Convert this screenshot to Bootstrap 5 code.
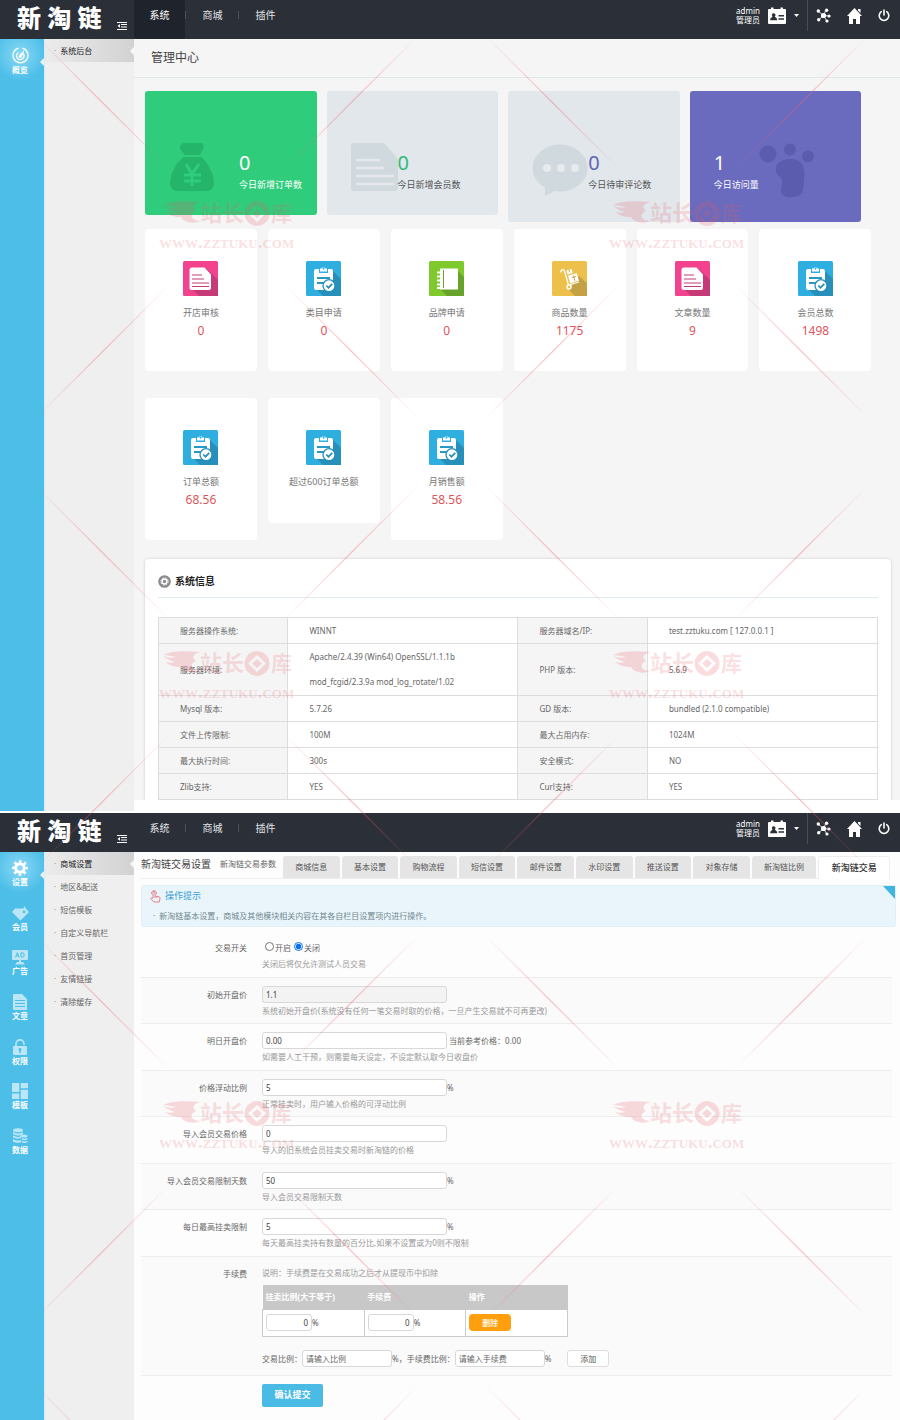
<!DOCTYPE html>
<html lang="zh-CN">
<head>
<meta charset="utf-8">
<meta name="viewport" content="width=device-width, initial-scale=1">
<title>新淘链 管理中心</title>
<link href="https://cdn.jsdelivr.net/npm/bootstrap@5.3.0/dist/css/bootstrap.min.css" rel="stylesheet">
<style>
body{font-family:"Noto Sans","Noto Sans CJK SC",sans-serif;font-size:8px;line-height:14px;color:#666;background:#fff}
a{color:inherit;text-decoration:none}
svg{display:block;flex:none}
/* top bar */
.topbar{height:39px;background:#2a2f38;color:#fff}
.brandmark{width:134px;padding-left:17px}
.brandmark a{font-size:24px;line-height:36px;font-weight:900;color:#fff}
.brandmark button{padding:0;border:0;background:none;color:#fff;margin:22px 7px 0 0}
.mainmenu a{display:block;width:51px;line-height:31px;font-size:10px;text-align:center;color:#e3e5e8}
.mainmenu a.on{background:#1f242c;color:#fff;border-radius:0 0 2px 2px}
.mainmenu i{width:1px;height:8px;margin:11px 1px 0 0;background:#4b525c}
.who{font-size:8px;line-height:9px;text-align:right;padding-top:6px}
.tools{height:31px;padding-right:10px}
.tools .rule{width:1px;height:31px;background:#484e57}
.tools button,.tools a{border:0;background:none;padding:0;color:#fff}
/* side bars */
.rail{width:45px;background:#4cbee8;border-right:1px solid #d5ecf5;color:#fff}
.rail a{display:flex;flex-direction:column;align-items:center;height:45px;padding:8px 4px 0 0;font-weight:700;position:relative;line-height:11px}
.rail a:nth-child(3n+2){height:44px}
.rail a svg{opacity:.62}
.rail a.on{background:radial-gradient(circle at 45% 35%,#8ad8f5,#4cbee8 70%)}
.rail a.on svg{opacity:1}
.rail a.on::after,.submenu a.on::after{content:"";position:absolute;right:0;top:50%;margin-top:-4px;border:4px solid transparent;border-left:0;border-right-color:#efefef}
.submenu{width:89px;background:#efefef}
.submenu a{display:block;height:23px;line-height:23px;padding-left:9px;color:#666;position:relative}
.submenu a::before{content:"·";margin-right:4px;color:#999}
.submenu a.on{background:linear-gradient(to right,#ececec,#d2d2d2);color:#222}
.submenu a.on::after{border-right-color:#f8f8f8}
.minw0{min-width:0}
/* dashboard */
.dash{background:#f5f5f5;margin-bottom:11px}
.dash h1{font-size:12px;line-height:38px;font-weight:400;color:#444;margin:0;padding-left:17px;border-bottom:1px solid #dde9ea}
.dashbody{padding:13px 9px 0 11px}
.tiles{display:grid;grid-template-columns:repeat(4,23%);gap:10px;align-items:start}
.tile{padding:52px 0 24px 24px;border-radius:3px;background:#e1e7eb;display:flex}
.tile strong{display:block;font-size:20px;line-height:20px;font-weight:400;padding-top:10px}
.tile small{display:block;font-size:9px;line-height:12px;padding-top:6px;white-space:nowrap;color:#555}
.tile.green{background:#2fcc7b;color:#fff}.tile.violet{background:#6a6bbe;color:#fff}
.tile.green small,.tile.violet small{color:#fff}
.c-green{color:#36b97a}.c-violet{color:#6465b5}
.counts{display:grid;grid-template-columns:repeat(6,15%);gap:27px 11px;align-items:start;margin-top:7px}
.count{background:#fff;border-radius:4px;padding:32px 0 33px;text-align:center}
.count svg{margin:0 auto 8px}
.count span{display:block;font-size:9px;line-height:17px;color:#777}
.count b{display:block;font-size:12px;line-height:20px;height:17px;font-weight:400;color:#e0555b}
.sysinfo{background:#fff;margin-top:19px;padding:13px 13px 0;border-radius:4px 4px 0 0;box-shadow:0 0 3px rgba(0,0,0,.18);clip-path:inset(-4px -4px 0 -4px)}
.sysinfo h2{font-size:10px;line-height:19px;font-weight:700;color:#222;margin:0 0 19px;padding-bottom:6px;border-bottom:1px solid #e0ecec}
.infotable{width:100%;table-layout:fixed;border-collapse:collapse;line-height:25px}
.infotable td,.infotable th{border:1px solid #ddd;padding:0 30px 0 21px;font-weight:400}
.infotable th{background:#f5f5f5;width:18%;padding-right:0}
.infotable tr.two td{padding-bottom:1px}
/* settings */
.settings{background:#fdfdfd;padding:4px 4px 0 7px}
.settings h1{font-size:10px;line-height:16px;font-weight:400;color:#444;margin:0 9px 0 0;white-space:nowrap}
.tabhead{border-bottom:1px solid #eee;margin-right:6px;height:23px}
.tabset{gap:2px;margin-left:7px}
.tabset a{flex:1 1 auto;height:22px;line-height:22px;text-align:center;background:#e5e5e5;border-radius:3px 3px 0 0;color:#555;white-space:nowrap;padding:0 10px}
.tabset a.on{background:#fff;border:1px solid #eee;border-bottom:0;height:23px;font-size:9px;font-weight:500;color:#333}
.tips{background:#eaf5fb;border-radius:3px;border:1px solid #e0f0f8;margin-top:6px;padding:3px 7px 4px;height:42px;position:relative;color:#71898f}
.tips h2{font-size:9px;line-height:14px;color:#389fd6;margin:0;font-weight:400}
.tips p{margin:6px 0 0 4px;line-height:14px}
.tips button{position:absolute;right:0;top:0;width:12px;height:13px;padding:0;border:0;background:#40b5df;clip-path:polygon(0 0,100% 0,100% 100%)}
.frow{display:flex;padding:8px 0 5px;margin-right:4px;border-bottom:1px solid #eee;line-height:17px;min-height:46px}
.frow:nth-of-type(odd){padding-bottom:6px}
.frow:nth-of-type(even){background:#fafafa}
.frow .cap{width:106px;text-align:right;margin-right:15px;flex:none}
.help{color:#999;line-height:14px;margin-top:1px}
.box{display:inline-block;width:185px;height:17px;border:1px solid #d8d8d8;border-radius:3px;padding:0 3px;font-size:8px;line-height:15px;color:#444;background:#fff}
.box:disabled{background:#f3f3f3}
.box.sm{width:46px;text-align:right}.box.md{width:90px}
.box::placeholder{color:#666;opacity:1}
.frow input[type=radio]{width:9px;height:9px;margin:0 1px 0 3px;accent-color:#0b6ff0}
.feetable{width:306px;border-collapse:collapse;table-layout:fixed;background:#fff;margin:5px 0 13px}
.feetable th{background:#c8c8c8;color:#fff;height:24px;padding:0 3px;border-bottom:1px solid #c8c8c8}
.feetable td{border:1px solid #ccc;height:27px;padding:0 3px;color:#555}
.del{width:42px;height:17px;border:0;border-radius:4px;background:#ff9f0d;color:#fff;font-weight:500;padding:0;display:block}
.addb{width:42px;height:17px;border:1px solid #ddd;border-radius:3px;background:#fff;color:#555;padding:0;line-height:15px}
.send{width:61px;height:23px;border:0;border-radius:2px;background:#4abbe5;color:#fff;font-size:9px;font-weight:700;margin:8px 0 14px 121px;padding:0}
.stamp{position:absolute;inset:0;width:100%;height:100%;pointer-events:none;overflow:hidden}
.stampurl{font:700 19px "Liberation Serif",serif;font-variant-caps:small-caps}
</style>
</head>
<body class="position-relative">

<svg width="0" height="0" class="position-absolute" aria-hidden="true">
<defs>
 <symbol id="i-fold" viewBox="0 0 10 8"><path fill="currentColor" d="M0 0h10v1H0zM4 2h6v1H4zM4 4.500h6v1H4zM0 7h10v1H0zM3 2v3.800L.5 3.900z"/></symbol>
 <symbol id="i-card" viewBox="0 0 18 17"><path fill="currentColor" fill-rule="evenodd" d="M1 2h2V.5h2.500V2h7V.5H15V2h2a1 1 0 0 1 1 1v13a1 1 0 0 1-1 1H1a1 1 0 0 1-1-1V3a1 1 0 0 1 1-1zM5.700 6.200a1.900 1.900 0 0 0-1.200 3.300c0 1-2.300.8-2.300 3.800h7c0-3-2.300-2.800-2.300-3.800a1.900 1.900 0 0 0-1.200-3.300zM10.500 8v1.600H16V8zm0 3.200v1.600H16v-1.600z"/></symbol>
 <symbol id="i-net" viewBox="0 0 15 15"><g stroke="currentColor" stroke-width=".8"><path d="M7.500 7.500 2 3M7.500 7.500 10 2M7.500 7.500 13 8M7.500 7.500 3 11.500M7.500 7.500 10.500 12.500"/></g><g fill="currentColor"><circle cx="7.500" cy="7.500" r="2.600"/><circle cx="2.300" cy="3" r="1.700"/><circle cx="10.600" cy="2.300" r="1.700"/><circle cx="13" cy="8" r="1.600"/><circle cx="2.700" cy="11.800" r="1.700"/><circle cx="11" cy="13" r="1.600"/></g></symbol>
 <symbol id="i-home" viewBox="0 0 15 16"><path fill="currentColor" d="M7.500 0 15 8h-2v8H9v-5H6v5H2V8H0zM11 1h2.500v4L11 2.500z"/></symbol>
 <symbol id="i-power" viewBox="0 0 12 13"><path fill="none" stroke="currentColor" stroke-width="1.600" stroke-linecap="round" d="M6 1v5M3.300 2.700a4.800 4.800 0 1 0 5.400 0"/></symbol>
 <symbol id="i-dial" viewBox="0 0 17 17"><g fill="none" stroke="currentColor" stroke-width="1.300"><path d="M6.500 1.100a7.500 7.500 0 1 0 4 0"/><path d="M6.500 5.500a3.800 3.800 0 1 0 4.500.7"/></g><path fill="currentColor" d="M12.500 2.500 9.800 9.700a1.600 1.600 0 1 1-2.600-1.500z"/></symbol>
 <symbol id="i-cog" viewBox="0 0 16 16"><g fill="none" stroke="currentColor"><circle cx="8" cy="8" r="4.300" stroke-width="3"/><circle cx="8" cy="8" r="6.600" stroke-width="2.500" stroke-dasharray="2.700 2.484" stroke-dashoffset="1.300"/></g></symbol>
 <symbol id="i-gem" viewBox="0 0 17 15"><path fill="currentColor" fill-rule="evenodd" d="M3 3h8.500l1-2.500L14 3.300l3 3.200L8.500 15 0 6.500zM12 5a1.300 1.300 0 1 0 .1 0z"/></symbol>
 <symbol id="i-ad" viewBox="0 0 16 16"><path fill="currentColor" d="M1 1h14a1 1 0 0 1 1 1v8a1 1 0 0 1-1 1H9v2h2l2 2.500H3L5 13h2v-2H1a1 1 0 0 1-1-1V2a1 1 0 0 1 1-1z"/><path d="M3.500 8.300 5.300 3.700l1.800 4.600M4.200 6.900h2.200M9 3.800v4.400h1.200a2 2.200 0 0 0 0-4.400z" fill="none" stroke="#4cbee8"/></symbol>
 <symbol id="i-page" viewBox="0 0 14 16"><path fill="currentColor" fill-rule="evenodd" d="M1 0h8l5 5v10a1 1 0 0 1-1 1H1a1 1 0 0 1-1-1V1a1 1 0 0 1 1-1zM2 6v1h10V6zm0 3v1h10V9zm0 3v1h10v-1z"/></symbol>
 <symbol id="i-lock" viewBox="0 0 14 16"><path fill="none" stroke="currentColor" stroke-width="1.700" d="M3 7V5a4 4.200 0 0 1 8 0v1"/><path fill="currentColor" fill-rule="evenodd" d="M1 7h12a1 1 0 0 1 1 1v7a1 1 0 0 1-1 1H1a1 1 0 0 1-1-1V8a1 1 0 0 1 1-1zm6 2a1.500 1.500 0 0 0-.7 2.800V14h1.400v-2.200A1.500 1.500 0 0 0 7 9z"/></symbol>
 <symbol id="i-grid" viewBox="0 0 16 16"><path fill="currentColor" d="M0 0h7.300v9H0zM8.700 0H16v5.300H8.700zM8.700 6.700H16V16H8.700zM0 10.500h7.300V16H0z"/></symbol>
 <symbol id="i-coin" viewBox="0 0 16 16"><g fill="currentColor"><ellipse cx="6" cy="2.200" rx="5" ry="2"/><path d="M1 4q5 3 10 0v2q-5 3-10 0zM1 7.300q5 3 8 .8v2q-4 1.500-8-.5zM1 11q4 2.500 8 1v2.300q-4 1.500-8-.5z"/><ellipse cx="12" cy="8" rx="3.500" ry="1.500"/><path d="M9.500 10q3 1.300 6 0v1.500q-3 1.500-6 0zM9.500 12.700q3 1.300 6 0v1.600q-3 1.500-6 0z"/></g></symbol>

 <symbol id="s-doc" viewBox="0 0 35 35"><rect width="35" height="35" rx="1.500" fill="#f4438e"/><path fill="#c63a78" d="M24 8 35 19v16H16l-8-8z"/><path fill="#fff" d="M9 6.500h12.500l6.500 7v13.500a2 2 0 0 1-2 2H8.500a2 2 0 0 1-2-2V9A2.500 2.500 0 0 1 9 6.500z"/><path stroke="#c63a78" d="M9 14h10M9 18h12M9 22h17M9 25.500h17"/></symbol>
 <symbol id="s-clip" viewBox="0 0 35 35"><rect width="35" height="35" rx="1.500" fill="#2eafdf"/><path fill="#268fba" d="M26 9 35 18v17H17l-8-8z"/><path fill="#fff" d="M10 8h3v4h9V8h3a2 2 0 0 1 2 2v9l-6 10H10a2 2 0 0 1-2-2V10a2 2 0 0 1 2-2z"/><path fill="#fff" fill-rule="evenodd" d="M14 7.500h1.500a2.200 2.200 0 0 1 4 0H21V10.500h-7zm3.500-.9a1 1 0 1 0 .1 0z"/><path stroke="#2799c6" stroke-width="1.800" d="M11 17h13M11 22h7"/><circle cx="23" cy="24.700" r="6" fill="#fff" stroke="#268fba" stroke-width="1.300"/><path fill="none" stroke="#268fba" stroke-width="1.700" d="m20.300 24.500 2.200 2.200 3.800-3.800"/></symbol>
 <symbol id="s-book" viewBox="0 0 35 35"><rect width="35" height="35" rx="1.500" fill="#7fc92d"/><path fill="#67a32a" d="m28 9 7 7v19H18l-7-7z"/><path fill="#fff" d="M11 7.500h18v21H11z"/><path stroke="#67a32a" d="M14.500 9v18"/><path stroke="#fff" stroke-width="1.800" d="M8 11.500h6M8 15.500h6M8 19.500h6M8 23.500h6M8 27h6"/></symbol>
 <symbol id="s-cart" viewBox="0 0 35 35"><rect width="35" height="35" rx="1.500" fill="#ecc04a"/><path fill="#c5a145" d="M27 15 35 22v13H23l-6-6z"/><path fill="none" stroke="#fff" stroke-width="1.300" d="M9 11.500C8.500 8 12 8 12.500 10l4 14L27 21"/><circle cx="17" cy="26" r="2" fill="none" stroke="#fff" stroke-width="1.400"/><path fill="#fff" d="m14.500 9.500 5-1.400 1.200 4-5 1.400zM16 14.700l8.700-2.500 2.300 7.500-8.700 2.600z"/><path stroke="#c5a145" d="m21.500 14.700 1.300 5M20 16.500l3.800-1M17 8.800l.5 2"/></symbol>

 <linearGradient id="fade" gradientUnits="userSpaceOnUse" x1="58" y1="58" x2="192" y2="192"><stop offset="0" stop-color="#f0606c" stop-opacity="0"/><stop offset=".5" stop-color="#f0606c" stop-opacity=".4"/><stop offset="1" stop-color="#f0606c" stop-opacity="0"/></linearGradient>
 <g id="rays" fill="url(#fade)"><path id="ray" d="M58 57 192 191v1.700L58 58.700z"/><use href="#ray" transform="rotate(90)"/><use href="#ray" transform="rotate(180)"/><use href="#ray" transform="rotate(270)"/></g>
 <g id="seal" fill="#e85c66" fill-opacity=".21">
  <path d="M-64-22c10-5 24-4 38-3-9 2-9 6-5 9-7 3-6 9 4 10-6 3-16 2-19-4-7 0-12-2-16-5 4 1 7 1 10 0-4-1-8-3-12-6 5 2 9 2 13 1-5-1-8-2-13-2z"/>
  <text x="-27" y="-6" font-size="22" font-weight="700">站长</text><text x="44" y="-6" font-size="21" font-weight="700">库</text>
  <path fill-rule="evenodd" d="M30-26a12.500 12.500 0 1 0 .1 0zm0 4 9 8.500-9 8.500-9-8.500zm0 4-5 4.500 5 4.500 5-4.500z"/>
  <text class="stampurl" x="-68" y="21">www.zztuku.com</text>
 </g>
</defs></svg>

<!-- dashboard screen -->
<section>
<header class="topbar d-flex">
 <div class="brandmark d-flex justify-content-between align-items-start"><a href="#">新 淘 链</a><button aria-label="折叠菜单"><svg width="10" height="8"><use href="#i-fold"/></svg></button></div>
 <nav class="mainmenu d-flex"><a class="on" href="#">系统</a><i></i><a href="#">商城</a><i></i><a href="#">插件</a></nav>
 <div class="tools d-flex ms-auto align-items-center">
  <div class="who align-self-start">admin<br>管理员</div>
  <button class="d-flex align-items-center ms-2" aria-label="账户"><svg width="18" height="17"><use href="#i-card"/></svg><svg class="ms-2" width="5" height="3"><path fill="#fff" d="M0 0h5L2.500 3z"/></svg></button>
  <span class="rule mx-2"></span>
  <a class="me-3" href="#" aria-label="网站地图"><svg width="15" height="15"><use href="#i-net"/></svg></a>
  <a class="me-3" href="#" aria-label="首页"><svg width="15" height="16"><use href="#i-home"/></svg></a>
  <a href="#" aria-label="退出"><svg width="12" height="13"><use href="#i-power"/></svg></a>
 </div>
</header>
<div class="d-flex">
 <nav class="rail flex-shrink-0"><a class="on" href="#"><svg width="17" height="17"><use href="#i-dial"/></svg>概览</a></nav>
 <nav class="submenu flex-shrink-0"><a class="on" href="#">系统后台</a></nav>
 <main class="flex-fill minw0">
  <div class="dash">
  <h1>管理中心</h1>
  <div class="dashbody">
   <div class="tiles">
    <div class="tile green"><svg width="46" height="48" viewBox="0 0 46 48"><path fill="#25b56a" d="M14 0h19q3 3 1 6l-3 6H16l-5-6q-1-3 3-6zM15 14h17c7 5 13 17 13 27q-1 7-7 7H8q-6 0-7-7c0-10 6-22 14-27z"/><path fill="none" stroke="#2fcc7b" stroke-width="3" d="m17 21 6 10 7-10M23 31v12M15 32h17M15 38h17"/></svg><div class="ms-4"><strong>0</strong><small>今日新增订单数</small></div></div>
    <div class="tile"><svg width="47" height="48" viewBox="0 0 47 48"><path fill="#d0d9dd" d="M3 0h30l14 16v29q0 3-3 3H3q-3 0-3-3V3q0-3 3-3z"/><path stroke="#e3e9ec" stroke-width="2.500" d="M5 17h24M5 25h28M5 33h38M5 41h38"/></svg><div><strong class="c-green">0</strong><small>今日新增会员数</small></div></div>
    <div class="tile"><svg width="56" height="55" viewBox="0 0 56 55"><ellipse cx="28" cy="25" rx="27.500" ry="23.500" fill="#d0d9dd"/><path fill="#d0d9dd" d="M13 40v13l14-7z"/><g fill="#e6ebee"><circle cx="15" cy="25" r="4"/><circle cx="29" cy="25" r="4"/><circle cx="43" cy="25" r="4"/></g></svg><div><strong class="c-violet">0</strong><small>今日待审评论数</small></div></div>
    <div class="tile violet"><div><strong>1</strong><small>今日访问量</small></div><svg width="56" height="55" viewBox="0 0 56 55"><g fill="#5c5cae"><circle cx="9" cy="11" r="8.500"/><circle cx="31" cy="6.500" r="6"/><circle cx="49" cy="13.500" r="6"/><path d="M17 24c2-9 21-11 26-3 4 7 2 16 1 26-1 9-22 10-22 1 0-6 3-11-1-14-3-2-5-5-4-10z"/></g></svg></div>
   </div>
   <div class="counts">
    <div class="count"><svg width="35" height="35"><use href="#s-doc"/></svg><span>开店审核</span><b>0</b></div>
    <div class="count"><svg width="35" height="35"><use href="#s-clip"/></svg><span>类目申请</span><b>0</b></div>
    <div class="count"><svg width="35" height="35"><use href="#s-book"/></svg><span>品牌申请</span><b>0</b></div>
    <div class="count"><svg width="35" height="35"><use href="#s-cart"/></svg><span>商品数量</span><b>1175</b></div>
    <div class="count"><svg width="35" height="35"><use href="#s-doc"/></svg><span>文章数量</span><b>9</b></div>
    <div class="count"><svg width="35" height="35"><use href="#s-clip"/></svg><span>会员总数</span><b>1498</b></div>
    <div class="count"><svg width="35" height="35"><use href="#s-clip"/></svg><span>订单总额</span><b>68.56</b></div>
    <div class="count"><svg width="35" height="35"><use href="#s-clip"/></svg><span>超过600订单总额</span></div>
    <div class="count"><svg width="35" height="35"><use href="#s-clip"/></svg><span>月销售额</span><b>58.56</b></div>
   </div>
   <div class="sysinfo">
    <h2 class="d-flex align-items-center"><svg class="me-1" width="13" height="13" viewBox="0 0 13 13"><circle cx="6.500" cy="6.500" r="6.300" fill="#8a8a8a"/><circle cx="6.500" cy="6.500" r="2.400" fill="none" stroke="#fff" stroke-width="1.500"/><circle cx="6.500" cy="6.500" r="3.700" fill="none" stroke="#fff" stroke-dasharray="1.500 1.400"/></svg>系统信息</h2>
    <table class="infotable">
     <colgroup><col style="width:18%"><col style="width:32%"><col style="width:18%"><col style="width:32%"></colgroup>
     <tr><th>服务器操作系统:</th><td>WINNT</td><th>服务器域名/IP:</th><td>test.zztuku.com [ 127.0.0.1 ]</td></tr>
     <tr class="two"><th>服务器环境:</th><td>Apache/2.4.39 (Win64) OpenSSL/1.1.1b mod_fcgid/2.3.9a mod_log_rotate/1.02</td><th>PHP 版本:</th><td>5.6.9</td></tr>
     <tr><th>Mysql 版本:</th><td>5.7.26</td><th>GD 版本:</th><td>bundled (2.1.0 compatible)</td></tr>
     <tr><th>文件上传限制:</th><td>100M</td><th>最大占用内存:</th><td>1024M</td></tr>
     <tr><th>最大执行时间:</th><td>300s</td><th>安全模式:</th><td>NO</td></tr>
     <tr><th>Zlib支持:</th><td>YES</td><th>Curl支持:</th><td>YES</td></tr>
    </table>
   </div>
  </div>
  </div>
 </main>
</div>
</section>

<!-- settings screen -->
<section class="border-top border-2 border-white">
<header class="topbar d-flex">
 <div class="brandmark d-flex justify-content-between align-items-start"><a href="#">新 淘 链</a><button aria-label="折叠菜单"><svg width="10" height="8"><use href="#i-fold"/></svg></button></div>
 <nav class="mainmenu d-flex"><a href="#">系统</a><i></i><a href="#">商城</a><i></i><a href="#">插件</a></nav>
 <div class="tools d-flex ms-auto align-items-center">
  <div class="who align-self-start">admin<br>管理员</div>
  <button class="d-flex align-items-center ms-2" aria-label="账户"><svg width="18" height="17"><use href="#i-card"/></svg><svg class="ms-2" width="5" height="3"><path fill="#fff" d="M0 0h5L2.500 3z"/></svg></button>
  <span class="rule mx-2"></span>
  <a class="me-3" href="#" aria-label="网站地图"><svg width="15" height="15"><use href="#i-net"/></svg></a>
  <a class="me-3" href="#" aria-label="首页"><svg width="15" height="16"><use href="#i-home"/></svg></a>
  <a href="#" aria-label="退出"><svg width="12" height="13"><use href="#i-power"/></svg></a>
 </div>
</header>
<div class="d-flex">
 <nav class="rail flex-shrink-0">
  <a class="on" href="#"><svg width="16" height="16"><use href="#i-cog"/></svg>设置</a>
  <a href="#"><svg width="17" height="16"><use href="#i-gem"/></svg>会员</a>
  <a href="#"><svg width="16" height="16"><use href="#i-ad"/></svg>广告</a>
  <a href="#"><svg width="14" height="16"><use href="#i-page"/></svg>文章</a>
  <a href="#"><svg width="14" height="16"><use href="#i-lock"/></svg>权限</a>
  <a href="#"><svg width="16" height="16"><use href="#i-grid"/></svg>模板</a>
  <a href="#"><svg width="16" height="16"><use href="#i-coin"/></svg>数据</a>
 </nav>
 <nav class="submenu flex-shrink-0"><a class="on" href="#">商城设置</a><a href="#">地区&amp;配送</a><a href="#">短信模板</a><a href="#">自定义导航栏</a><a href="#">首页管理</a><a href="#">友情链接</a><a href="#">清除缓存</a></nav>
 <main class="settings flex-fill minw0">
  <div class="tabhead d-flex">
   <h1>新淘链交易设置</h1><span class="text-nowrap pt-1 lh-1">新淘链交易参数</span>
   <nav class="tabset d-flex flex-fill"><a href="#">商城信息</a><a href="#">基本设置</a><a href="#">购物流程</a><a href="#">短信设置</a><a href="#">邮件设置</a><a href="#">水印设置</a><a href="#">推送设置</a><a href="#">对象存储</a><a href="#">新淘链比例</a><a class="on" href="#">新淘链交易</a></nav>
  </div>
  <div class="tips">
   <h2 class="d-flex align-items-center"><svg class="me-1" width="12" height="13" viewBox="0 0 12 13"><path fill="none" stroke="#e4858c" d="M4 8V2.500a1 1 0 0 1 2 0V6l4 .8q1.200.3 1 1.500L10.300 12H5L1.500 8.500Q2 7 4 8.500M6 6v2M8 6.500V8M2.500 4a2.600 2.600 0 1 1 5 0"/></svg>操作提示</h2>
   <p>·&nbsp; 新淘链基本设置，商城及其他模块相关内容在其各自栏目设置项内进行操作。</p>
   <button aria-label="收起提示"></button>
  </div>
  <form class="pt-1">
   <div class="frow"><span class="cap">交易开关</span><div><input type="radio" name="sw" id="on"><label for="on">开启</label><input type="radio" name="sw" id="off" checked><label for="off">关闭</label><div class="help">关闭后将仅允许测试人员交易</div></div></div>
   <div class="frow"><label class="cap" for="f1">初始开盘价</label><div><div class="d-flex"><input class="box" id="f1" value="1.1" disabled></div><div class="help">系统初始开盘价(系统没有任何一笔交易时取的价格，一旦产生交易就不可再更改)</div></div></div>
   <div class="frow"><label class="cap" for="f2">明日开盘价</label><div><div class="d-flex"><input class="box" id="f2" value="0.00">&nbsp;当前参考价格：0.00</div><div class="help">如需要人工干预，则需要每天设定，不设定默认取今日收盘价</div></div></div>
   <div class="frow"><label class="cap" for="f3">价格浮动比例</label><div><div class="d-flex"><input class="box" id="f3" value="5">%</div><div class="help">正常挂卖时，用户输入价格的可浮动比例</div></div></div>
   <div class="frow"><label class="cap" for="f4">导入会员交易价格</label><div><div class="d-flex"><input class="box" id="f4" value="0"></div><div class="help">导入的旧系统会员挂卖交易时新淘链的价格</div></div></div>
   <div class="frow"><label class="cap" for="f5">导入会员交易限制天数</label><div><div class="d-flex"><input class="box" id="f5" value="50">%</div><div class="help">导入会员交易限制天数</div></div></div>
   <div class="frow"><label class="cap" for="f6">每日最高挂卖限制</label><div><div class="d-flex"><input class="box" id="f6" value="5">%</div><div class="help">每天最高挂卖持有数量的百分比,如果不设置或为0则不限制</div></div></div>
   <div class="frow pb-2"><span class="cap">手续费</span><div>
    <div class="help">说明：手续费是在交易成功之后才从提现币中扣除</div>
    <table class="feetable"><thead><tr><th>挂卖比例(大于等于)</th><th>手续费</th><th>操作</th></tr></thead>
    <tbody><tr><td><input class="box sm" value="0" aria-label="挂卖比例">%</td><td><input class="box sm" value="0" aria-label="手续费">%</td><td><button type="button" class="del">删除</button></td></tr></tbody></table>
    <div class="d-flex"><label for="r1">交易比例：</label><input class="box md" id="r1" placeholder="请输入比例"><span>%，</span><label for="r2">手续费比例：</label><input class="box md" id="r2" placeholder="请输入手续费"><span class="me-3">%</span><button type="button" class="addb">添加</button></div>
   </div></div>
   <button type="submit" class="send">确认提交</button>
  </form>
 </main>
</div>
</section>

<svg class="stamp" aria-hidden="true">
 <use href="#rays" x="227" y="227"/><use href="#rays" x="677" y="227"/><use href="#rays" x="227" y="677"/><use href="#rays" x="677" y="677"/><use href="#rays" x="227" y="1127"/><use href="#rays" x="677" y="1127"/><use href="#rays" x="227" y="1577"/><use href="#rays" x="677" y="1577"/>
 <use href="#seal" x="227" y="227"/><use href="#seal" x="677" y="227"/><use href="#seal" x="227" y="677"/><use href="#seal" x="677" y="677"/><use href="#seal" x="227" y="1127"/><use href="#seal" x="677" y="1127"/>
</svg>
<script src="https://cdn.jsdelivr.net/npm/bootstrap@5.3.0/dist/js/bootstrap.bundle.min.js"></script>
</body>
</html>
